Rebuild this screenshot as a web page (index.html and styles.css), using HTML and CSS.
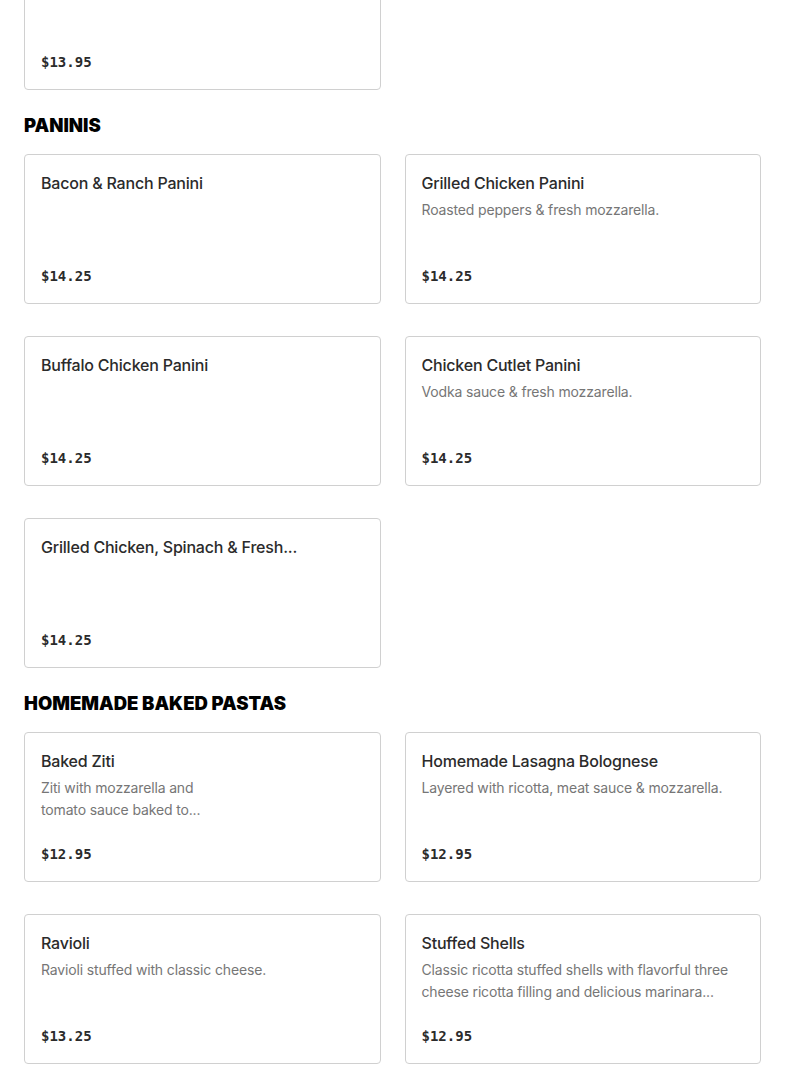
FILE: index.html
```html
<!DOCTYPE html>
<html lang="en">
<head>
<meta charset="utf-8">
<title>Menu</title>
<link rel="stylesheet" href="styles.css">
</head>
<body>
<main class="menu">
  <section class="section section-first">
    <div class="grid">
      <article class="card">
        <h3 class="title"></h3>
        <div class="price">$13.95</div>
      </article>
    </div>
  </section>

  <section class="section">
    <h2 class="heading">PANINIS</h2>
    <div class="grid">
      <article class="card">
        <h3 class="title">Bacon &amp; Ranch Panini</h3>
        <div class="price">$14.25</div>
      </article>
      <article class="card">
        <h3 class="title">Grilled Chicken Panini</h3>
        <p class="desc">Roasted peppers &amp; fresh mozzarella.</p>
        <div class="price">$14.25</div>
      </article>
      <article class="card">
        <h3 class="title">Buffalo Chicken Panini</h3>
        <div class="price">$14.25</div>
      </article>
      <article class="card">
        <h3 class="title">Chicken Cutlet Panini</h3>
        <p class="desc">Vodka sauce &amp; fresh mozzarella.</p>
        <div class="price">$14.25</div>
      </article>
      <article class="card">
        <h3 class="title">Grilled Chicken, Spinach &amp; Fresh...</h3>
        <div class="price">$14.25</div>
      </article>
    </div>
  </section>

  <section class="section">
    <h2 class="heading">HOMEMADE BAKED PASTAS</h2>
    <div class="grid">
      <article class="card">
        <h3 class="title">Baked Ziti</h3>
        <p class="desc desc-narrow">Ziti with mozzarella and tomato sauce baked to...</p>
        <div class="price">$12.95</div>
      </article>
      <article class="card">
        <h3 class="title">Homemade Lasagna Bolognese</h3>
        <p class="desc">Layered with ricotta, meat sauce &amp; mozzarella.</p>
        <div class="price">$12.95</div>
      </article>
      <article class="card">
        <h3 class="title">Ravioli</h3>
        <p class="desc">Ravioli stuffed with classic cheese.</p>
        <div class="price">$13.25</div>
      </article>
      <article class="card">
        <h3 class="title">Stuffed Shells</h3>
        <p class="desc">Classic ricotta stuffed shells with flavorful three cheese ricotta filling and delicious marinara...</p>
        <div class="price">$12.95</div>
      </article>
    </div>
  </section>
</main>
</body>
</html>
```

FILE: styles.css
```css
* { box-sizing: border-box; }

html, body {
  margin: 0;
  padding: 0;
  background: #ffffff;
  overflow: hidden;
}

body {
  font-family: Inter, "Noto Sans", "Liberation Sans", sans-serif;
  color: #2b2b2b;
}

.menu {
  padding: 0 24px;
}

.section-first {
  margin-top: -60px;
}

.heading {
  margin: 23px 0 16px;
  font-family: Inter, "Liberation Sans", sans-serif;
  font-weight: 900;
  font-size: 18.5px;
  line-height: 25px;
  color: #000000;
}

.grid {
  display: grid;
  grid-template-columns: 1fr 1fr;
  column-gap: 24px;
  row-gap: 32px;
}

.card {
  height: 150px;
  border: 1px solid #d0d0d0;
  border-radius: 4px;
  padding: 15px 16px 16px;
  display: flex;
  flex-direction: column;
  background: #ffffff;
}

.title {
  margin: 0;
  font-size: 16px;
  font-weight: 500;
  line-height: 26px;
  letter-spacing: -0.2px;
  color: #2b2b2b;
  white-space: nowrap;
  overflow: hidden;
  text-overflow: ellipsis;
}

.desc {
  margin: 3px 0 0;
  font-size: 14px;
  line-height: 22px;
  letter-spacing: -0.15px;
  color: #767676;
}

.desc-narrow {
  max-width: 185px;
}

.price {
  margin-top: auto;
  font-family: "DejaVu Sans Mono", "Liberation Mono", monospace;
  font-size: 14px;
  font-weight: 700;
  line-height: 22px;
  color: #2b2b2b;
}
```
